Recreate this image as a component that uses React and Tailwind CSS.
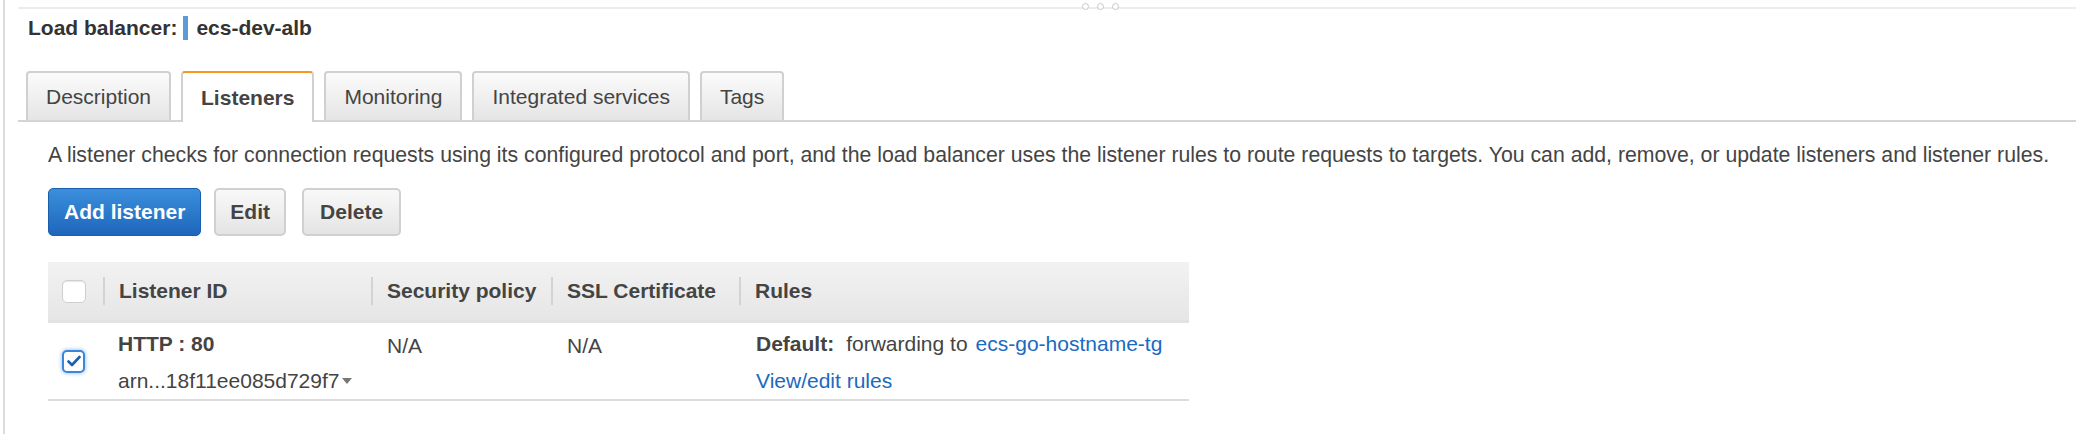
const tabs = ['Description', 'Listeners', 'Monitoring', 'Integrated services', 'Tags'];

function Checkbox({ checked }) {
  if (checked) {
    return (
      <span className="flex h-[23px] w-[23px] items-center justify-center rounded-[5px] border-2 border-[#3a86d9] bg-white shadow-[0_0_4px_#7fb3ec]">
        <svg width="14" height="12" viewBox="0 0 14 12">
          <path d="M1.5 6.5 L5 10 L12.5 2" fill="none" stroke="#1d5fb0" strokeWidth="2.6" strokeLinecap="round" strokeLinejoin="round" />
        </svg>
      </span>
    );
  }
  return <span className="block h-[23px] w-[24px] rounded-[5px] border border-[#cfcfcf] bg-white shadow-[inset_0_1px_1px_#e6e6e6]" />;
}

function HeaderCell({ children }) {
  return (
    <div className="flex items-center">
      <span className="h-[28px] w-[2px] bg-[#d3d3d3]" />
      <span className="ml-[14px] font-bold text-[#444]">{children}</span>
    </div>
  );
}

export default function App() {
  return (
    <div className="flex h-[434px] w-full bg-white font-['Liberation_Sans',Arial,sans-serif] text-[21px] leading-[24px] text-[#444]">
      <div className="ml-[3px] w-[2px] bg-[#dcdcdc]" />

      <div className="relative ml-[13px] mt-[7px] flex-1 border-t-2 border-[#ececec]">
        {/* resize handle */}
        <div className="absolute left-[1064px] top-[-6px] flex gap-[8px]">
          <span className="h-[7px] w-[7px] rounded-full border border-[#c8c8c8] bg-white" />
          <span className="h-[7px] w-[7px] rounded-full border border-[#c8c8c8] bg-white" />
          <span className="h-[7px] w-[7px] rounded-full border border-[#c8c8c8] bg-white" />
        </div>

        <div className="mt-[7px] flex items-center pl-[10px] font-bold text-[#333]">
          <span>Load balancer:</span>
          <span className="ml-[6px] h-[24px] w-[5px] bg-[#5b9bd8]" />
          <span className="ml-[8px]">ecs-dev-alb</span>
        </div>

        {/* tabs */}
        <div className="mt-[31px] flex items-end gap-[10px] border-b-2 border-[#d4d4d4] pl-[8px]">
          {tabs.map((t) => {
            const active = t === 'Listeners';
            return (
              <div
                key={t}
                className={
                  active
                    ? 'mb-[-2px] flex h-[51px] items-center rounded-t-[4px] border-x-2 border-t-2 border-x-[#d0d0d0] border-t-[#f7981d] bg-white px-[18px] font-bold text-[#444]'
                    : 'flex h-[49px] items-center rounded-t-[4px] border-x-2 border-t-2 border-[#d0d0d0] bg-gradient-to-b from-[#fbfbfb] to-[#e5e5e5] px-[18px] text-[#444]'
                }
              >
                {t}
              </div>
            );
          })}
        </div>

        <div className="pl-[30px]">
          <p className="mt-[21px] text-[21.25px]">
            A listener checks for connection requests using its configured protocol and port, and the load balancer uses the listener rules to route requests to targets. You can add, remove, or update listeners and listener rules.
          </p>

          <div className="mt-[21px] flex gap-[13px]">
            <button className="h-[48px] rounded-[5px] border border-[#1a5fae] bg-gradient-to-b from-[#3b8fdc] to-[#1e66bc] px-[15px] font-bold text-white">
              Add listener
            </button>
            <button className="h-[48px] rounded-[5px] border-2 border-[#d0d0d0] bg-gradient-to-b from-[#f9f9f9] to-[#e4e4e4] px-[14px] font-bold text-[#444]">
              Edit
            </button>
            <button className="ml-[3px] h-[48px] rounded-[5px] border-2 border-[#d0d0d0] bg-gradient-to-b from-[#f9f9f9] to-[#e4e4e4] px-[16px] font-bold text-[#444]">
              Delete
            </button>
          </div>

          {/* listeners table */}
          <div className="mt-[26px] w-[1141px]">
            <div className="grid h-[61px] grid-cols-[55px_268px_180px_188px_450px] border-b-[3px] border-[#e2e2e2] bg-gradient-to-b from-[#f2f2f2] to-[#e6e6e6]">
              <div className="flex items-center pl-[14px]">
                <Checkbox />
              </div>
              <HeaderCell>Listener ID</HeaderCell>
              <HeaderCell>Security policy</HeaderCell>
              <HeaderCell>SSL Certificate</HeaderCell>
              <HeaderCell>Rules</HeaderCell>
            </div>

            <div className="grid h-[78px] grid-cols-[55px_268px_180px_188px_450px] border-b-2 border-[#dcdcdc]">
              <div className="flex items-center pl-[14px]">
                <Checkbox checked />
              </div>
              <div className="pl-[15px] pt-[9px]">
                <div className="font-bold">HTTP : 80</div>
                <div className="mt-[13px] flex items-center whitespace-nowrap">
                  arn...18f11ee085d729f7
                  <svg className="ml-[3px]" width="10" height="6" viewBox="0 0 10 6">
                    <path d="M0 0 L10 0 L5 6 Z" fill="#777" />
                  </svg>
                </div>
              </div>
              <div className="pl-[16px] pt-[11px]">N/A</div>
              <div className="pl-[16px] pt-[11px]">N/A</div>
              <div className="pl-[17px] pt-[9px]">
                <div className="whitespace-nowrap">
                  <span className="font-bold">Default:</span>
                  <span className="ml-[12px]">forwarding to</span>
                  <span className="ml-[8px] text-[#1a6ac0]">ecs-go-hostname-tg</span>
                </div>
                <div className="mt-[13px] text-[#1a6ac0]">View/edit rules</div>
              </div>
            </div>
          </div>
        </div>
      </div>
    </div>
  );
}
